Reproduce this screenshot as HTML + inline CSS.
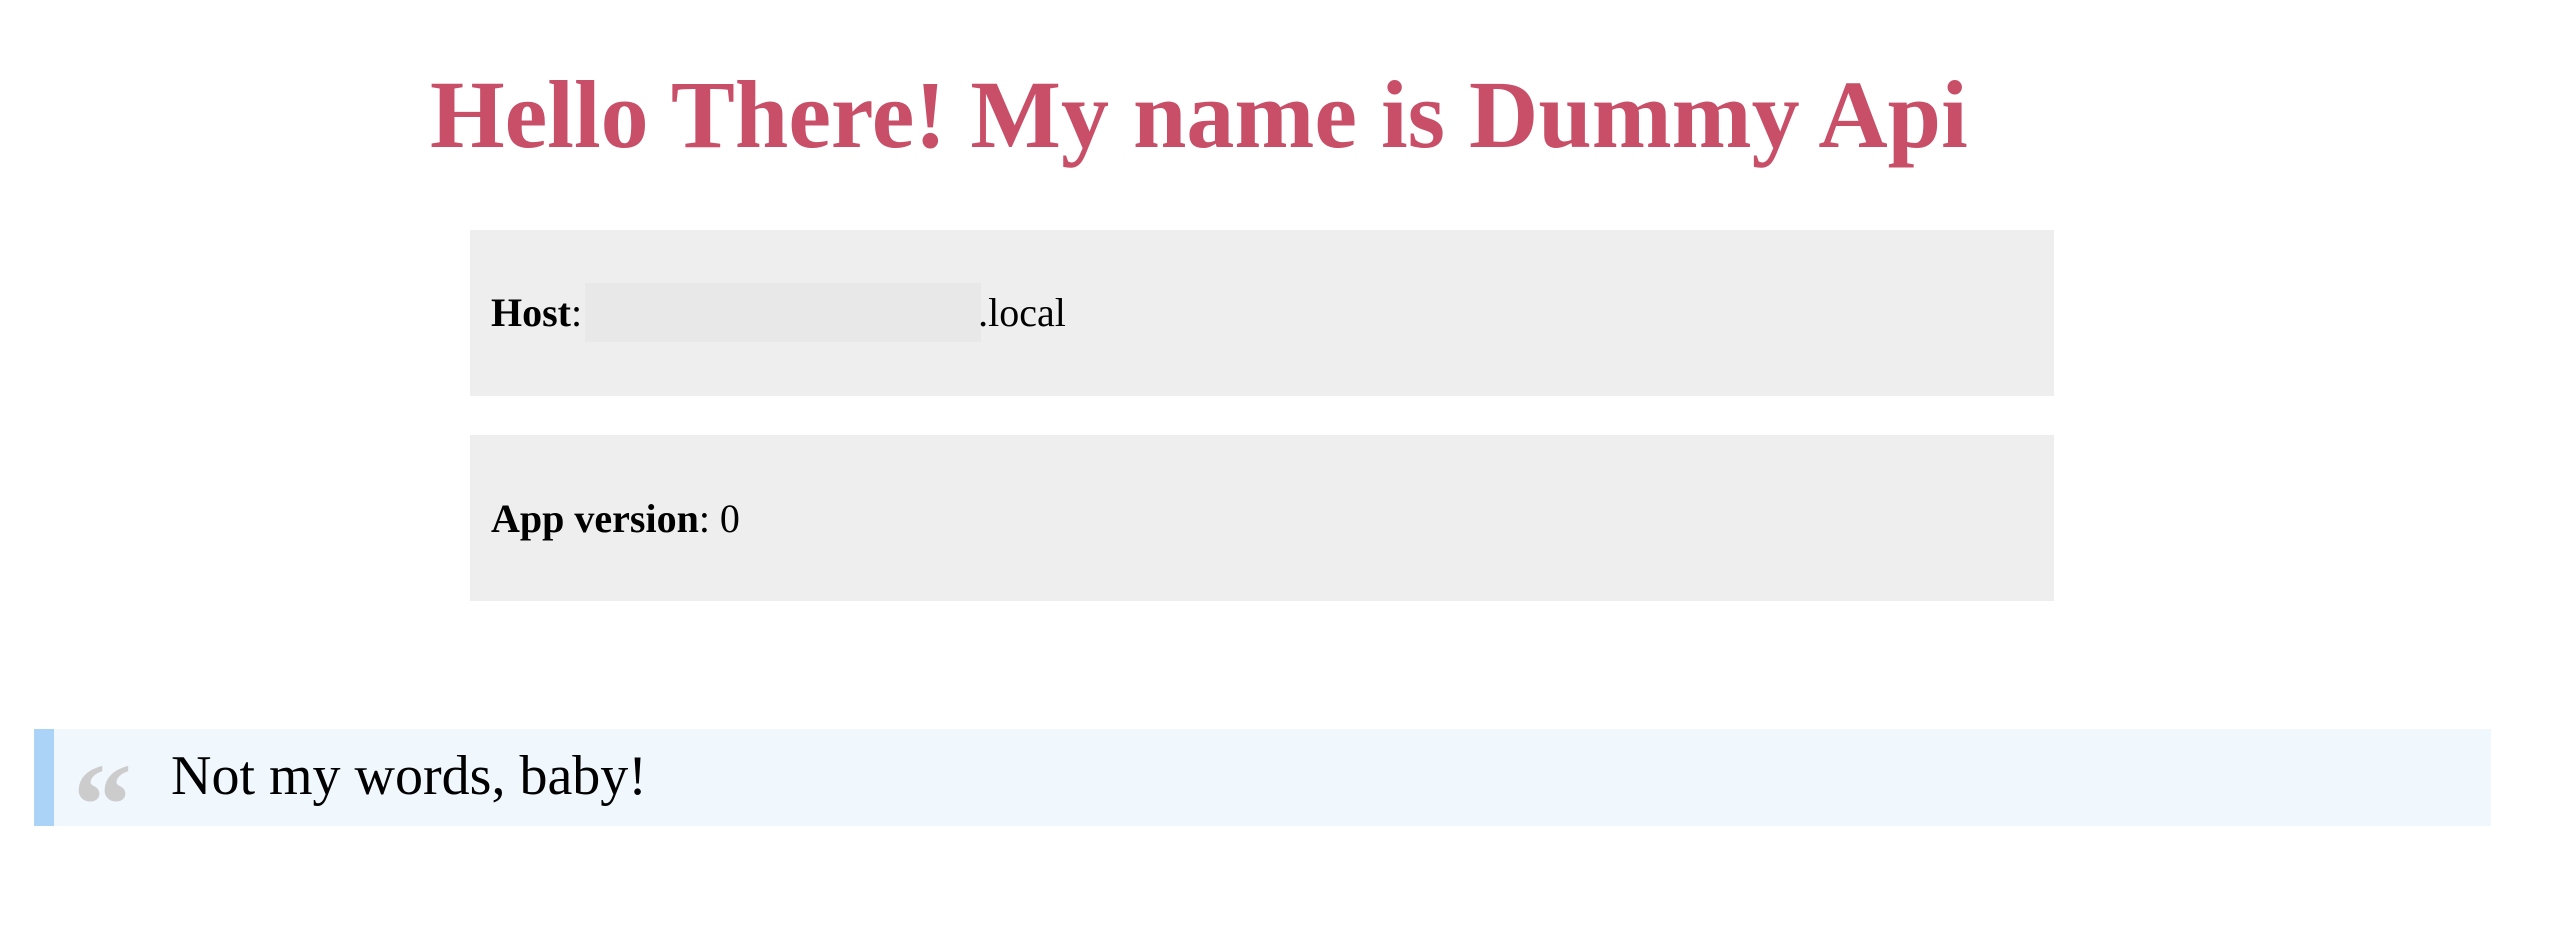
<!DOCTYPE html>
<html><head><meta charset="utf-8"><style>
html,body{margin:0;padding:0;background:#fff;width:2576px;height:948px;overflow:hidden;position:relative;font-family:"Liberation Serif",serif;}
.a{position:absolute;white-space:nowrap;line-height:1.107;}
</style></head><body>
<div class="a" style="left:430px;top:62px;font-size:96px;font-weight:bold;color:#c94f68;">Hello There! My name is Dummy Api</div>
<div style="position:absolute;left:470px;top:230px;width:1584px;height:166px;background:#eeeeee;"></div>
<div style="position:absolute;left:585px;top:283px;width:396px;height:59px;background:#e8e8e8;"></div>
<div class="a" style="left:491px;top:291px;font-size:40px;color:#000;"><b>Host</b>:<span style="display:inline-block;width:396px;"></span>.local</div>
<div style="position:absolute;left:470px;top:435px;width:1584px;height:166px;background:#eeeeee;"></div>
<div class="a" style="left:491px;top:497px;font-size:40px;color:#000;"><b>App version</b>: 0</div>
<div style="position:absolute;left:34px;top:729px;width:2457px;height:97px;background:#f0f7fd;"></div>
<div style="position:absolute;left:34px;top:729px;width:20px;height:97px;background:#abd2f7;"></div>
<div class="a" style="left:73px;top:740px;font-size:118px;font-weight:bold;color:#cccccc;">“</div>
<div class="a" style="left:171px;top:745px;font-size:56px;color:#000;">Not my words, baby!</div>
</body></html>
